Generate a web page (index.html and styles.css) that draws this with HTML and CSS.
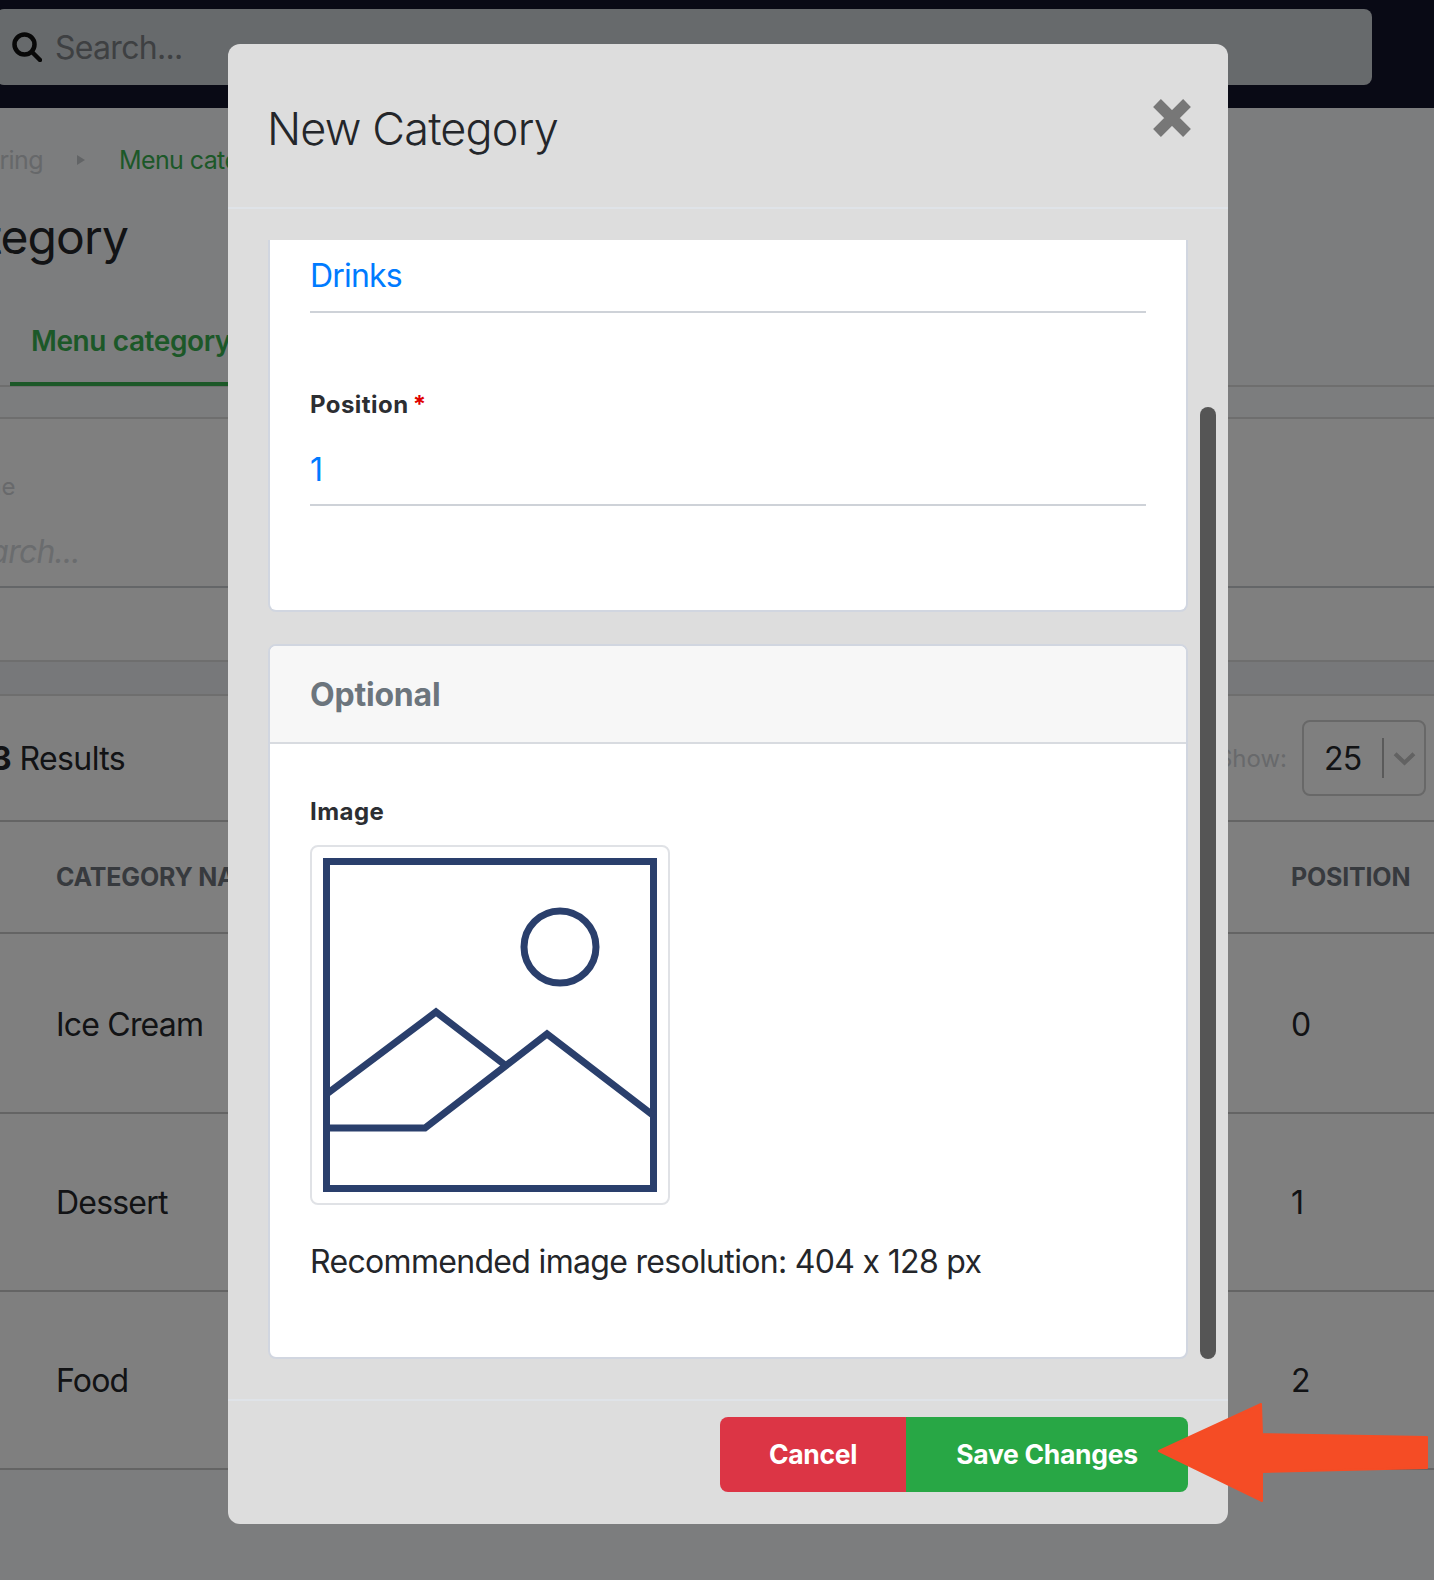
FILE: index.html
```html
<!DOCTYPE html>
<html lang="en">
<head>
<meta charset="utf-8">
<title>New Category</title>
<link rel="stylesheet" href="styles.css">
</head>
<body>
<div class="page">
  <header class="topbar">
    <div class="search">
      <svg class="search-icon" viewBox="0 0 30 30" aria-hidden="true"><circle cx="12.5" cy="12.5" r="10"/><path d="M20 20 28 28"/></svg>
      <span>Search...</span>
    </div>
  </header>
  <section class="head">
    <nav class="crumbs"><span class="crumb-root">Catering</span><span class="crumb-sep"></span><span class="crumb-link">Menu category</span></nav>
    <h1 class="page-title">Menu category</h1>
    <div class="tabs"><span class="tab">Menu category</span></div>
  </section>
  <section class="filter">
    <div class="filter-label">Name</div>
    <div class="filter-input">Search...</div>
  </section>
  <div class="filter-foot"></div>
  <section class="results">
    <div class="results-bar">
      <div class="results-count"><strong>3</strong> Results</div>
      <div class="show">
        <span class="show-label">Show:</span>
        <div class="select"><span class="select-value">25</span><span class="select-div"></span>
          <svg class="chevron" viewBox="0 0 22 14" aria-hidden="true"><path d="M2 2.5 11 11 20 2.5"/></svg>
        </div>
      </div>
    </div>
    <div class="row row-head"><span>CATEGORY NAME</span><span>POSITION</span></div>
    <div class="row row-tall"><span>Ice Cream</span><span>0</span></div>
    <div class="row"><span>Dessert</span><span>1</span></div>
    <div class="row"><span>Food</span><span>2</span></div>
  </section>
</div>

<div class="backdrop"></div>

<div class="modal">
  <div class="modal-head">
    <h2 class="modal-title">New Category</h2>
    <svg class="close" viewBox="0 0 38 38" aria-hidden="true"><path d="M4 4 34 34M34 4 4 34"/></svg>
  </div>
  <div class="modal-body">
    <div class="scroller">
      <div class="card card-clipped">
        <div class="value value-first">Drinks</div>
        <label class="label label-position">Position <span class="req">*</span></label>
        <div class="value value-second">1</div>
      </div>
      <div class="card card-optional">
        <div class="card-head">Optional</div>
        <div class="card-content">
          <label class="label">Image</label>
          <div class="image-box">
            <svg viewBox="0 0 356 356" aria-hidden="true">
              <rect class="frame" x="14.5" y="14.5" width="327" height="327"/>
              <circle cx="248" cy="100" r="36"/>
              <path d="M14 247.500 124 165 193 218"/>
              <path d="M14 281 113 281 235 187 342 269"/>
            </svg>
          </div>
          <p class="hint">Recommended image resolution: 404 x 128 px</p>
        </div>
      </div>
    </div>
    <div class="thumb"></div>
  </div>
  <div class="modal-foot">
    <div class="btn-group">
      <button class="btn btn-cancel">Cancel</button>
      <button class="btn btn-save">Save Changes</button>
    </div>
  </div>
</div>

<svg class="arrow" viewBox="0 0 276 102" aria-hidden="true">
  <path d="M2 49 104 2 105 32 270 35 270 66 105 70 105 99Z"/>
</svg>
</body>
</html>
```

FILE: styles.css
```css
* { box-sizing: border-box; }
html, body { margin: 0; height: 100%; overflow: hidden; }
body { font-family: Inter, "Liberation Sans", sans-serif; font-feature-settings: "calt" 0; color: #24262a; background: #f9fafc; }

.page { width: 1434px; height: 1580px; overflow: hidden; background: #f9fafc; }

.topbar { height: 108px; padding-top: 9px; background: #12142a; }
.search { display: flex; align-items: center; gap: 13px; width: 1376px; height: 76px; margin-left: -4px; padding-left: 16px; border-radius: 8px; background: #ced4d8; font-size: 32px; letter-spacing: -.7px; color: #7c8084; }
.search-icon { width: 30px; height: 30px; fill: none; stroke: #111; stroke-width: 4.5px; stroke-linecap: round; }

.head { height: 279px; padding-top: 37px; border-bottom: 2px solid #dcdcdc; }
.crumbs { display: flex; align-items: center; height: 30px; margin-left: -53px; font-size: 25px; letter-spacing: -.6px; }
.crumb-root { color: #cdd0d4; }
.crumb-sep { width: 0; height: 0; margin: 0 34px 0 34px; border-left: 8px solid #c4c8cc; border-top: 5px solid transparent; border-bottom: 5px solid transparent; }
.crumb-link { color: #38b050; }
.page-title { margin: 32px 0 0 -204px; font-size: 48px; line-height: 60px; font-weight: 400; letter-spacing: -.9px; color: #24262a; }
.tabs { margin-top: 54px; padding-left: 10px; }
.tab { display: inline-block; width: 300px; height: 65px; padding-left: 21px; border-bottom: 4px solid #38b050; font-size: 28px; line-height: 40px; font-weight: 600; letter-spacing: -.4px; color: #38b050; }

.filter { height: 171px; margin-top: 30px; background: #fff; border-top: 2px solid #dcdcdc; border-bottom: 2px solid #c8ccd0; overflow: hidden; }
.filter-label { margin: 53px 0 0 -51px; font-size: 24px; line-height: 30px; color: #d0d3d7; }
.filter-input { margin: 30px 0 0 -48px; font-size: 32px; line-height: 40px; font-style: italic; letter-spacing: -.8px; color: #d4d8dc; }
.filter-foot { height: 106px; background: linear-gradient(#fff 0 72px, #dcdcdc 72px 74px, #eff0f4 74px); }

.results { background: #fff; border-top: 2px solid #dcdcdc; }
.results-bar { display: flex; justify-content: space-between; align-items: center; height: 126px; padding-right: 8px; border-bottom: 2px solid #c8c8c8; }
.results-count { margin-left: -9px; font-size: 32px; letter-spacing: -.6px; color: #24262a; }
.show { display: flex; align-items: center; gap: 15px; }
.show-label { font-size: 24px; color: #d0d3d7; }
.select { display: flex; align-items: center; width: 124px; height: 76px; padding-left: 20px; border: 2px solid #d0d0d0; border-radius: 8px; font-size: 32px; letter-spacing: -.8px; }
.select-value { width: 58px; }
.select-div { width: 2px; height: 40px; background: #b4b4b4; }
.chevron { width: 23px; height: 15px; margin-left: 9px; fill: none; stroke: #c4c4c4; stroke-width: 4px; }

.row { display: grid; grid-template-columns: 1235px 1fr; align-items: center; height: 178px; padding-left: 56px; border-bottom: 2px solid #c8c8c8; font-size: 32px; letter-spacing: -.8px; color: #24262a; }
.row-tall { height: 180px; padding-top: 3px; }
.row-head { height: 112px; font-size: 25px; line-height: 30px; font-weight: 700; letter-spacing: -.2px; color: #6f757d; }

.backdrop { position: fixed; inset: 0; background: rgba(0, 0, 0, .5); }

.modal { position: fixed; left: 228px; top: 44px; display: flex; flex-direction: column; width: 1000px; height: 1480px; border-radius: 12px; background: #ddd; }
.modal-head { position: relative; height: 165px; padding: 56px 39px 0; border-bottom: 2px solid #dfe3e8; }
.modal-title { margin: 0; font-size: 45px; line-height: 58px; font-weight: 300; letter-spacing: -.85px; color: #24262a; }
.close { position: absolute; left: 925px; top: 55px; width: 38px; height: 38px; fill: none; stroke: #777; stroke-width: 11px; }

.modal-body { position: relative; flex: 1; padding: 31px 40px 40px; }
.scroller { height: 100%; overflow: hidden; }
.thumb { position: absolute; left: 972px; top: 198px; width: 16px; height: 952px; border-radius: 8px; background: #555; }

.card { background: #fff; border: 2px solid #d1d6e0; border-radius: 8px; }
.card-clipped { height: 372px; padding: 0 40px; border-top: 0; border-radius: 0 0 8px 8px; }
.value { height: 73px; border-bottom: 2px solid #ced2d8; font-size: 32px; line-height: 40px; letter-spacing: -.8px; color: #007bff; padding-top: 16px; }
.value-second { height: 73px; padding-top: 17px; }
.label { display: block; font-size: 24px; line-height: 30px; font-weight: 700; letter-spacing: .45px; color: #2c2e32; }
.label-position { margin-top: 77px; margin-bottom: 13px; }
.req { margin-left: -2px; color: #e00000; }

.card-optional { height: 715px; margin-top: 32px; }
.card-head { height: 98px; padding: 28px 40px 0; background: #f7f7f7; border-bottom: 2px solid #d8dbe0; border-radius: 6px 6px 0 0; font-size: 32px; line-height: 42px; font-weight: 700; letter-spacing: -.2px; color: #6c757d; }
.card-content { padding: 53px 40px 0; }
.image-box { width: 360px; height: 360px; margin-top: 18px; border: 2px solid #e0e2e6; border-radius: 8px; }
.image-box svg { display: block; width: 356px; height: 356px; fill: none; stroke: #2a3f6c; stroke-width: 7px; }
.hint { margin: 37px 0 0; font-size: 32px; line-height: 40px; letter-spacing: -.68px; color: #24262a; }

.modal-foot { display: flex; justify-content: flex-end; height: 125px; padding: 16px 40px 0 0; border-top: 2px solid #dfe3e8; }
.btn-group { display: flex; height: 75px; }
.btn { height: 75px; border: 0; padding: 0 0 2px; font-family: inherit; font-size: 26.5px; font-weight: 700; color: #fff; }
.btn-cancel { width: 186px; background: #dc3545; border-radius: 8px 0 0 8px; letter-spacing: -.3px; }
.btn-save { width: 282px; background: #28a745; border-radius: 0 8px 8px 0; letter-spacing: -.3px; }

.arrow { position: fixed; left: 1157px; top: 1402px; width: 276px; height: 102px; fill: #f54c25; stroke: #f54c25; stroke-width: 2px; stroke-linejoin: round; }
```
